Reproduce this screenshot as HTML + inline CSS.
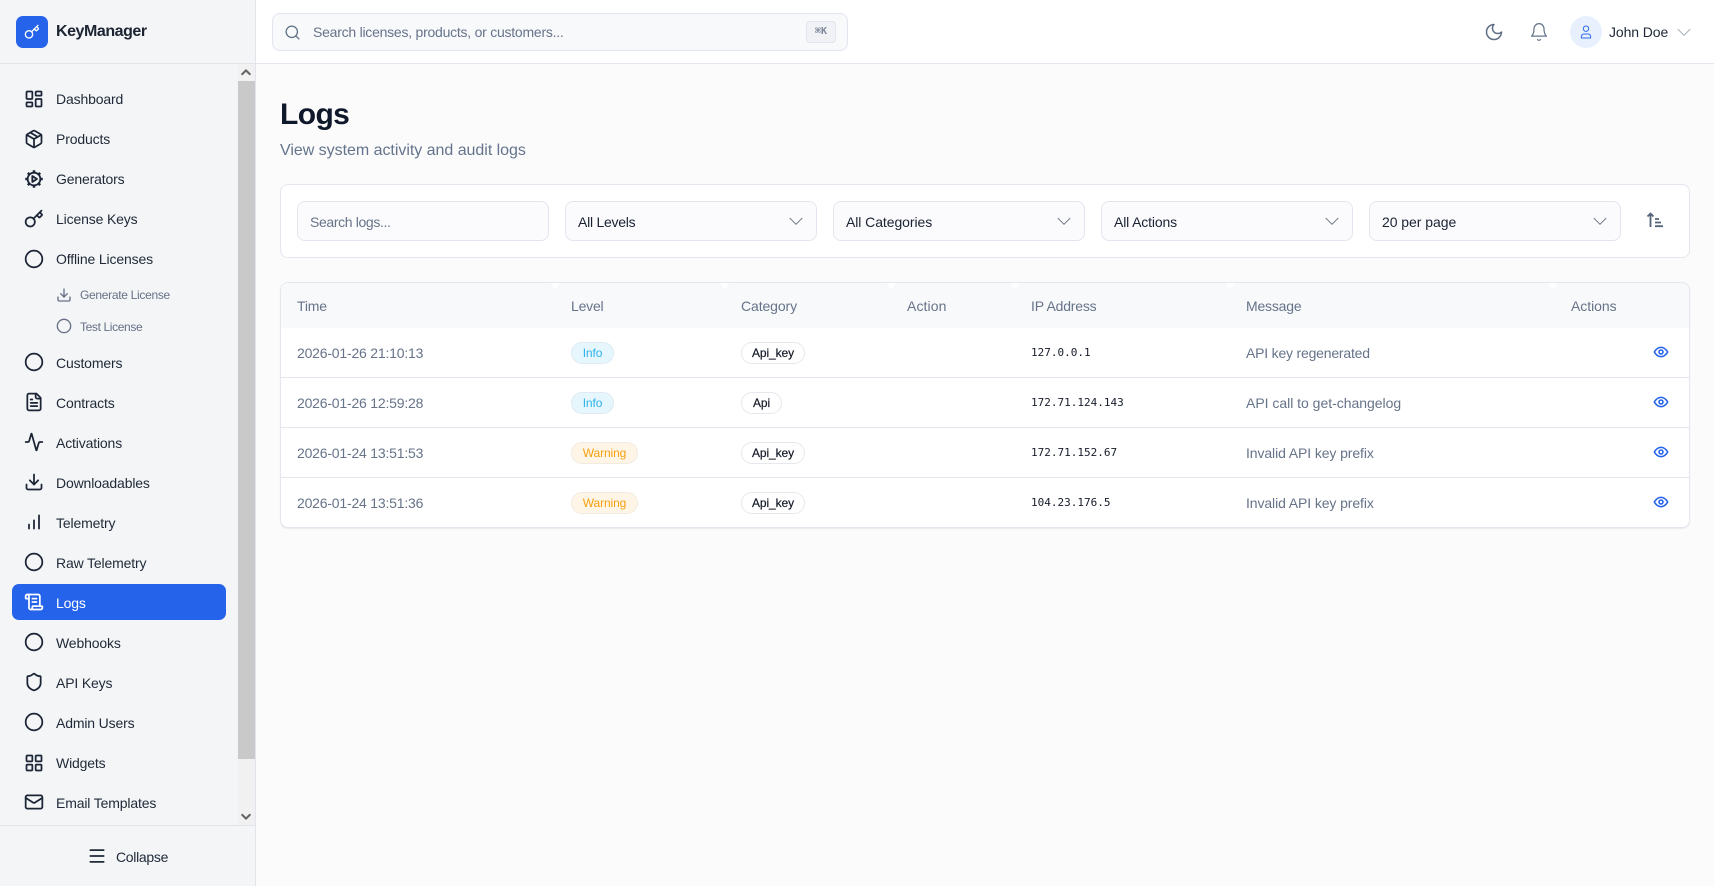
<!DOCTYPE html>
<html lang="en">
<head>
<meta charset="utf-8">
<title>Logs</title>
<style>
*{box-sizing:border-box;margin:0;padding:0}
html,body{width:1714px;height:886px;overflow:hidden;background:#fbfbfc;font-family:"Liberation Sans",sans-serif;color:#1e293b}
.a{position:absolute}
.t{position:absolute;white-space:nowrap;line-height:20px;height:20px}
svg{position:absolute;display:block;fill:none;stroke:currentColor;stroke-width:2;stroke-linecap:round;stroke-linejoin:round}
#side{position:absolute;left:0;top:0;width:256px;height:886px;background:#f4f5f7;border-right:1px solid #e2e4ec}
.nav{font-size:14px;left:56px;color:#1f2937;letter-spacing:-.15px}
.ni{left:24px;width:20px;height:20px;color:#1b2536;stroke-width:2.1}
.sub{font-size:12px;left:80px;color:#667085}
.box{position:absolute;top:201px;height:40px;background:#fbfbfd;border:1px solid #e3e5ee;border-radius:8px}
.sel{font-size:14px;color:#1a2233;letter-spacing:-.15px;top:212px}
.chev{top:213px;width:16px;height:16px;color:#6b7280;stroke-width:1.5}
.th{font-size:14px;color:#667389;top:296px;letter-spacing:-.2px}
.c{font-size:14px;color:#667389;letter-spacing:-.2px}
.ip{font-family:"DejaVu Sans Mono",monospace;font-size:11px;color:#161c2a;left:1031px}
.line{position:absolute;left:281px;width:1408px;height:1px;background:#e4e6ee}
.b{position:absolute;height:22px;border-radius:11px;font-size:12px;line-height:20px;text-align:center;border:1px solid}
.info{left:571px;width:43px;background:#e6f6fd;border-color:#dfeaf2;color:#2db2ee;letter-spacing:-.1px}
.warn{left:571px;width:67px;background:#fef5e7;border-color:#f1ebe1;color:#f5a00f;letter-spacing:-.1px}
.cat{left:741px;background:#fff;border-color:#e6e8ee;color:#141a27;font-weight:400;-webkit-text-stroke:.2px #141a27;letter-spacing:-.1px}
.eye{left:1653px;width:16px;height:16px;color:#2563eb;stroke-width:2.3}
.n{position:absolute;top:283px;width:8px;height:6px;background:#fff;clip-path:polygon(0 0,100% 0,58% 100%,42% 100%)}
</style>
</head>
<body>

<!-- Sidebar -->
<div id="side"></div>
<div class="a" style="left:0;top:63px;width:255px;height:1px;background:#e2e4ec"></div>
<div class="a" style="left:16px;top:16px;width:32px;height:32px;border-radius:7px;background:#2563eb"></div>
<svg style="left:24px;top:24px;color:#fff;stroke-width:2" width="16" height="16" viewBox="0 0 24 24"><path d="m15.5 7.5 2.3 2.3a1 1 0 0 0 1.4 0l2.1-2.1a1 1 0 0 0 0-1.4L19 4"/><path d="m21 2-9.6 9.6"/><circle cx="7.5" cy="15.5" r="5.5"/></svg>
<div class="t" style="left:56px;top:22px;font-size:16px;font-weight:700;color:#1c2433;letter-spacing:-.45px">KeyManager</div>

<!-- scrollbar -->
<div class="a" style="left:238px;top:64px;width:17px;height:761px;background:#f1f1f1"></div>
<div class="a" style="left:238px;top:81px;width:17px;height:678px;background:#c9c9c9"></div>
<svg style="left:241px;top:67px;color:#666;stroke-width:5" width="10" height="10" viewBox="0 0 24 24"><path d="M3 17 12 8l9 9"/></svg>
<svg style="left:241px;top:812px;color:#666;stroke-width:5" width="10" height="10" viewBox="0 0 24 24"><path d="M3 7l9 9 9-9"/></svg>

<!-- active item -->
<div class="a" style="left:12px;top:584px;width:214px;height:36px;border-radius:7px;background:#2563eb"></div>

<!-- nav icons -->
<svg class="ni" style="top:89px" viewBox="0 0 24 24"><rect x="3" y="3" width="7" height="9" rx="1"/><rect x="14" y="3" width="7" height="5" rx="1"/><rect x="14" y="12" width="7" height="9" rx="1"/><rect x="3" y="16" width="7" height="5" rx="1"/></svg>
<div class="t nav" style="top:89px">Dashboard</div>

<svg class="ni" style="top:129px" viewBox="0 0 24 24"><path d="M21 8a2 2 0 0 0-1-1.730l-7-4a2 2 0 0 0-2 0l-7 4A2 2 0 0 0 3 8v8a2 2 0 0 0 1 1.730l7 4a2 2 0 0 0 2 0l7-4A2 2 0 0 0 21 16Z"/><path d="m3.300 7 8.700 5 8.700-5"/><path d="M12 22V12"/><path d="m7.500 4.270 9 5.150"/></svg>
<div class="t nav" style="top:129px">Products</div>

<svg class="ni" style="top:169px;stroke-width:2.2" viewBox="0 0 24 24"><circle cx="12" cy="12" r="7.600"/><path stroke-width="3" stroke-linecap="butt" d="M12 1.500v3M12 19.500v3M1.500 12h3M19.500 12h3M4.600 4.600l2 2M17.400 17.400l2 2M4.600 19.400l2-2M17.400 6.600l2-2"/><path d="M10 8.500v7l5.500-3.500z"/></svg>
<div class="t nav" style="top:169px">Generators</div>

<svg class="ni" style="top:209px" viewBox="0 0 24 24"><path d="m15.500 7.500 2.300 2.300a1 1 0 0 0 1.400 0l2.100-2.100a1 1 0 0 0 0-1.400L19 4"/><path d="m21 2-9.600 9.600"/><circle cx="7.500" cy="15.500" r="5.500"/></svg>
<div class="t nav" style="top:209px">License Keys</div>

<svg class="ni" style="top:249px" viewBox="0 0 24 24"><circle cx="12" cy="12" r="10"/></svg>
<div class="t nav" style="top:249px">Offline Licenses</div>

<svg style="left:56px;top:287px;width:16px;height:16px;color:#667085" viewBox="0 0 24 24"><path d="M21 15v4a2 2 0 0 1-2 2H5a2 2 0 0 1-2-2v-4"/><path d="m7 10 5 5 5-5"/><path d="M12 15V3"/></svg>
<div class="t sub" style="top:285px;letter-spacing:-.3px">Generate License</div>

<svg style="left:56px;top:318px;width:16px;height:16px;color:#667085" viewBox="0 0 24 24"><circle cx="12" cy="12" r="10"/></svg>
<div class="t sub" style="top:317px;letter-spacing:-.37px">Test License</div>

<svg class="ni" style="top:352px" viewBox="0 0 24 24"><circle cx="12" cy="12" r="10"/></svg>
<div class="t nav" style="top:353px">Customers</div>

<svg class="ni" style="top:392px" viewBox="0 0 24 24"><path d="M15 2H6a2 2 0 0 0-2 2v16a2 2 0 0 0 2 2h12a2 2 0 0 0 2-2V7Z"/><path d="M14 2v4a2 2 0 0 0 2 2h4"/><path d="M8 13h8M8 17h8M8 9h2"/></svg>
<div class="t nav" style="top:393px">Contracts</div>

<svg class="ni" style="top:432px" viewBox="0 0 24 24"><path d="M22 12h-2.500a2 2 0 0 0-1.900 1.500l-2.400 8.300a.25.25 0 0 1-.5 0L9.200 2.200a.25.25 0 0 0-.5 0L6.300 10.500A2 2 0 0 1 4.400 12H2"/></svg>
<div class="t nav" style="top:433px">Activations</div>

<svg class="ni" style="top:472px" viewBox="0 0 24 24"><path d="M21 15v4a2 2 0 0 1-2 2H5a2 2 0 0 1-2-2v-4"/><path d="m7 10 5 5 5-5"/><path d="M12 15V3"/></svg>
<div class="t nav" style="top:473px">Downloadables</div>

<svg class="ni" style="top:512px" viewBox="0 0 24 24"><path d="M18 20V4M12 20V10M6 20v-5"/></svg>
<div class="t nav" style="top:513px">Telemetry</div>

<svg class="ni" style="top:552px" viewBox="0 0 24 24"><circle cx="12" cy="12" r="10"/></svg>
<div class="t nav" style="top:553px">Raw Telemetry</div>

<svg class="ni" style="top:592px;color:#fff" viewBox="0 0 24 24"><path d="M15 12h-5M15 8h-5"/><path d="M19 17V5a2 2 0 0 0-2-2H4"/><path d="M8 21h12a2 2 0 0 0 2-2v-1a1 1 0 0 0-1-1H11a1 1 0 0 0-1 1v1a2 2 0 1 1-4 0V5a2 2 0 1 0-4 0v2a1 1 0 0 0 1 1h3"/></svg>
<div class="t nav" style="top:593px;color:#fff">Logs</div>

<svg class="ni" style="top:632px" viewBox="0 0 24 24"><circle cx="12" cy="12" r="10"/></svg>
<div class="t nav" style="top:633px">Webhooks</div>

<svg class="ni" style="top:672px" viewBox="0 0 24 24"><path d="M20 13c0 5-3.500 7.500-7.660 8.950a1 1 0 0 1-.67-.01C7.500 20.500 4 18 4 13V6a1 1 0 0 1 1-1c2 0 4.500-1.200 6.240-2.720a1.170 1.170 0 0 1 1.520 0C14.510 3.810 17 5 19 5a1 1 0 0 1 1 1z"/></svg>
<div class="t nav" style="top:673px">API Keys</div>

<svg class="ni" style="top:712px" viewBox="0 0 24 24"><circle cx="12" cy="12" r="10"/></svg>
<div class="t nav" style="top:713px">Admin Users</div>

<svg class="ni" style="top:753px" viewBox="0 0 24 24"><rect x="3" y="3" width="7" height="7" rx="1"/><rect x="14" y="3" width="7" height="7" rx="1"/><rect x="14" y="14" width="7" height="7" rx="1"/><rect x="3" y="14" width="7" height="7" rx="1"/></svg>
<div class="t nav" style="top:753px">Widgets</div>

<svg class="ni" style="top:792px" viewBox="0 0 24 24"><rect x="2" y="4" width="20" height="16" rx="2"/><path d="m22 7-8.970 5.700a1.940 1.940 0 0 1-2.060 0L2 7"/></svg>
<div class="t nav" style="top:793px">Email Templates</div>

<div class="a" style="left:0;top:825px;width:255px;height:1px;background:#e2e4ec"></div>
<svg style="left:87px;top:846px;width:20px;height:20px;color:#1f2937;stroke-width:2.100" viewBox="0 0 24 24"><path d="M4 5h16M4 12h16M4 19h16"/></svg>
<div class="t" style="left:116px;top:847px;font-size:14px;color:#1f2937;letter-spacing:-.3px">Collapse</div>

<!-- Topbar -->
<div class="a" style="left:256px;top:0;width:1458px;height:64px;background:#fff;border-bottom:1px solid #e5e7ee"></div>
<div class="a" style="left:272px;top:13px;width:576px;height:38px;border-radius:8px;background:#f8f9fb;border:1px solid #e3e5ee"></div>
<svg style="left:284px;top:24px;width:17px;height:17px;color:#5f6f84;stroke-width:1.800" viewBox="0 0 24 24"><circle cx="11" cy="11" r="8"/><path d="m21 21-4.300-4.300"/></svg>
<div class="t" style="left:313px;top:22px;font-size:14px;color:#667389;letter-spacing:-.24px">Search licenses, products, or customers...</div>
<div class="a" style="left:806px;top:21px;width:30px;height:22px;border-radius:4px;background:#f0f2f6;border:1px solid #e3e5ee;font-size:10px;line-height:20px;text-align:center;color:#7c8698;font-family:'DejaVu Sans Mono',monospace;font-weight:700">⌘K</div>

<svg style="left:1484px;top:22px;width:20px;height:20px;color:#5f6f84;stroke-width:1.800" viewBox="0 0 24 24"><path d="M12 3a6 6 0 0 0 9 9 9 9 0 1 1-9-9Z"/></svg>
<svg style="left:1529px;top:22px;width:20px;height:20px;color:#66758a;stroke-width:1.500" viewBox="0 0 24 24"><path d="M10.300 21a1.940 1.940 0 0 0 3.400 0"/><path d="M6 8a6 6 0 0 1 12 0c0 7 3 9 3 9H3s3-2 3-9"/></svg>
<div class="a" style="left:1570px;top:16px;width:32px;height:32px;border-radius:50%;background:#e8effd"></div>
<svg style="left:1578px;top:24px;width:16px;height:16px;color:#2f6df0;stroke-width:1.500" viewBox="0 0 24 24"><circle cx="12" cy="7" r="4"/><path d="M19 21v-2a4 4 0 0 0-4-4H9a4 4 0 0 0-4 4v2z"/></svg>
<div class="t" style="left:1609px;top:22px;font-size:14px;color:#1f2937;letter-spacing:-.1px">John Doe</div>
<svg style="left:1676px;top:24px;width:16px;height:16px;color:#a0a8b5;stroke-width:1.500" viewBox="0 0 24 24"><path d="m3 8 9 9 9-9"/></svg>

<!-- Title -->
<div class="t" style="left:280px;top:95px;height:40px;line-height:40px;font-size:30px;font-weight:700;color:#0f172a;letter-spacing:-.6px">Logs</div>
<div class="t" style="left:280px;top:141px;font-size:16px;color:#64748b;letter-spacing:-.03px">View system activity and audit logs</div>

<!-- Filter card -->
<div class="a" style="left:280px;top:184px;width:1410px;height:74px;background:#fff;border:1px solid #e5e7ee;border-radius:8px"></div>
<div class="box" style="left:297px;width:252px"></div>
<div class="t" style="left:310px;top:212px;font-size:14px;color:#667389;letter-spacing:-.36px">Search logs...</div>

<div class="box" style="left:565px;width:252px"></div>
<div class="t sel" style="left:578px;letter-spacing:-.25px">All Levels</div>
<svg class="chev" style="left:788px" viewBox="0 0 24 24"><path d="m3 8 9 9 9-9"/></svg>

<div class="box" style="left:833px;width:252px"></div>
<div class="t sel" style="left:846px;letter-spacing:-.07px">All Categories</div>
<svg class="chev" style="left:1056px" viewBox="0 0 24 24"><path d="m3 8 9 9 9-9"/></svg>

<div class="box" style="left:1101px;width:252px"></div>
<div class="t sel" style="left:1114px">All Actions</div>
<svg class="chev" style="left:1324px" viewBox="0 0 24 24"><path d="m3 8 9 9 9-9"/></svg>

<div class="box" style="left:1369px;width:252px"></div>
<div class="t sel" style="left:1382px;letter-spacing:-.05px">20 per page</div>
<svg class="chev" style="left:1592px" viewBox="0 0 24 24"><path d="m3 8 9 9 9-9"/></svg>

<svg style="left:1645px;top:210px;width:20px;height:20px;color:#55647a;stroke-width:1.800;stroke-linecap:butt" viewBox="0 0 20 20"><path d="M5.500 17V3.500M2.500 6.500l3-3 3 3"/><path d="M10 9h4M10 12.500h6M10 16.200h8"/></svg>

<!-- Table -->
<div class="a" style="left:280px;top:282px;width:1410px;height:246px;background:#fff;border:1px solid #e5e7ee;border-radius:8px;box-shadow:0 1px 1px rgba(15,23,42,.08)"></div>
<div class="a" style="left:281px;top:283px;width:1408px;height:45px;background:#f8f9fb;border-radius:7px 7px 0 0"></div>
<div class="n" style="left:551px"></div>
<div class="n" style="left:721px"></div>
<div class="n" style="left:887px"></div>
<div class="n" style="left:1011px"></div>
<div class="n" style="left:1226px"></div>
<div class="n" style="left:1549px"></div>

<div class="t th" style="left:297px">Time</div>
<div class="t th" style="left:571px">Level</div>
<div class="t th" style="left:741px;letter-spacing:-.1px">Category</div>
<div class="t th" style="left:907px;letter-spacing:.1px">Action</div>
<div class="t th" style="left:1031px">IP Address</div>
<div class="t th" style="left:1246px">Message</div>
<div class="t th" style="left:1571px;letter-spacing:-.05px">Actions</div>

<div class="line" style="top:377px"></div>
<div class="line" style="top:427px"></div>
<div class="line" style="top:477px"></div>

<!-- rows -->
<div class="t c" style="left:297px;top:343px">2026-01-26 21:10:13</div>
<div class="b info" style="top:342px">Info</div>
<div class="b cat" style="top:342px;width:64px">Api_key</div>
<div class="t ip" style="top:343px">127.0.0.1</div>
<div class="t c" style="left:1246px;top:343px">API key regenerated</div>
<svg class="eye" style="top:344px" viewBox="0 0 24 24"><path d="M2 12s3.500-7 10-7 10 7 10 7-3.500 7-10 7-10-7-10-7Z"/><circle cx="12" cy="12" r="3"/></svg>

<div class="t c" style="left:297px;top:393px">2026-01-26 12:59:28</div>
<div class="b info" style="top:392px">Info</div>
<div class="b cat" style="top:392px;width:41px">Api</div>
<div class="t ip" style="top:393px">172.71.124.143</div>
<div class="t c" style="left:1246px;top:393px;letter-spacing:-.02px">API call to get-changelog</div>
<svg class="eye" style="top:394px" viewBox="0 0 24 24"><path d="M2 12s3.500-7 10-7 10 7 10 7-3.500 7-10 7-10-7-10-7Z"/><circle cx="12" cy="12" r="3"/></svg>

<div class="t c" style="left:297px;top:443px">2026-01-24 13:51:53</div>
<div class="b warn" style="top:442px">Warning</div>
<div class="b cat" style="top:442px;width:64px">Api_key</div>
<div class="t ip" style="top:443px">172.71.152.67</div>
<div class="t c" style="left:1246px;top:443px;letter-spacing:-.1px">Invalid API key prefix</div>
<svg class="eye" style="top:444px" viewBox="0 0 24 24"><path d="M2 12s3.500-7 10-7 10 7 10 7-3.500 7-10 7-10-7-10-7Z"/><circle cx="12" cy="12" r="3"/></svg>

<div class="t c" style="left:297px;top:493px">2026-01-24 13:51:36</div>
<div class="b warn" style="top:492px">Warning</div>
<div class="b cat" style="top:492px;width:64px">Api_key</div>
<div class="t ip" style="top:493px">104.23.176.5</div>
<div class="t c" style="left:1246px;top:493px;letter-spacing:-.1px">Invalid API key prefix</div>
<svg class="eye" style="top:494px" viewBox="0 0 24 24"><path d="M2 12s3.500-7 10-7 10 7 10 7-3.500 7-10 7-10-7-10-7Z"/><circle cx="12" cy="12" r="3"/></svg>

</body>
</html>
